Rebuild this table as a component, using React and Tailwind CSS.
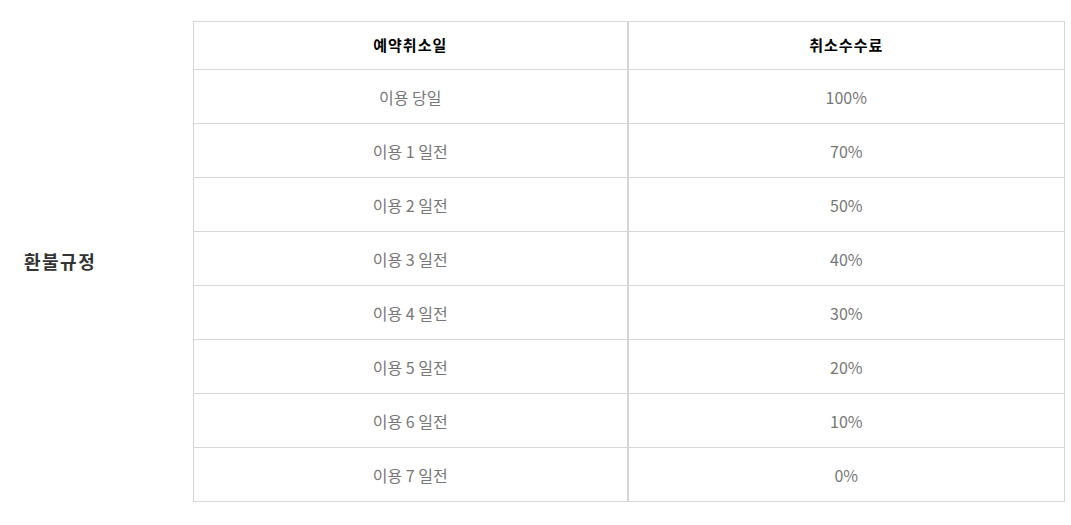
import React from "react";

const rows = [
  ["이용 당일", "100%"],
  ["이용 1 일전", "70%"],
  ["이용 2 일전", "50%"],
  ["이용 3 일전", "40%"],
  ["이용 4 일전", "30%"],
  ["이용 5 일전", "20%"],
  ["이용 6 일전", "10%"],
  ["이용 7 일전", "0%"],
];

export default function App() {
  return (
    <div
      className="flex bg-white pt-[21px] pb-[23px]"
      style={{ fontFamily: '"Noto Sans CJK KR", "Noto Sans", sans-serif' }}
    >
      <div className="flex w-[193px] shrink-0 items-center pl-[24px]">
        <span className="text-[18px] font-bold tracking-[1.5px] text-[#333]">환불규정</span>
      </div>
      <table className="w-[872px] border-collapse border border-[#d6d6d6] text-center">
        <thead>
          <tr className="h-[48px]">
            <th className="w-[434px] border-r-2 border-[#d6d6d6] text-[15px] font-bold tracking-[1px] text-black">
              예약취소일
            </th>
            <th className="text-[15px] font-bold tracking-[1px] text-black">취소수수료</th>
          </tr>
        </thead>
        <tbody>
          {rows.map(([day, fee]) => (
            <tr key={day} className="h-[54px] border-t border-[#d6d6d6]">
              <td className="border-r-2 border-[#d6d6d6] text-[16px] text-[#777]">{day}</td>
              <td className="text-[16px] text-[#777]">{fee}</td>
            </tr>
          ))}
        </tbody>
      </table>
    </div>
  );
}
